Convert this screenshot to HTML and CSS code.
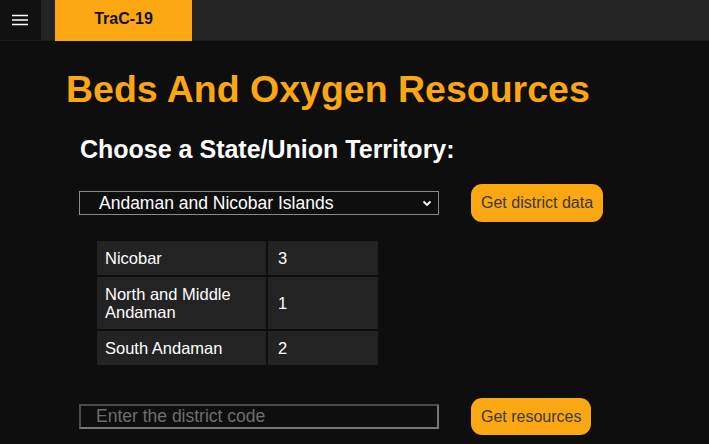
FILE: index.html
```html
<!DOCTYPE html>
<html>
<head>
<meta charset="utf-8">
<link rel="stylesheet" href="styles.css">
</head>
<body>
<nav class="topbar">
  <div class="menu-btn">
    <svg width="16" height="12" viewBox="0 0 16 12"><path d="M0 1.5h16M0 6h16M0 10.5h16" stroke="#fff" stroke-width="1.3"/></svg>
  </div>
  <div class="brand">TraC-19</div>
</nav>
<main class="content">
  <h1 class="title">Beds And Oxygen Resources</h1>
  <h2 class="subtitle">Choose a State/Union Territory:</h2>
  <div class="row">
    <div class="select-box">
      <span class="select-text">Andaman and Nicobar Islands</span>
      <svg class="chev" width="10" height="7" viewBox="0 0 10 7"><path d="M1.5 1.5L5 5l3.5-3.5" fill="none" stroke="#fff" stroke-width="1.8"/></svg>
    </div>
    <button class="btn">Get district data</button>
  </div>
  <table class="districts">
    <tr><td class="name">Nicobar</td><td class="code">3</td></tr>
    <tr><td class="name">North and Middle Andaman</td><td class="code">1</td></tr>
    <tr><td class="name">South Andaman</td><td class="code">2</td></tr>
  </table>
  <div class="row row-bottom">
    <input class="code-input" type="text" placeholder="Enter the district code">
    <button class="btn btn-res">Get resources</button>
  </div>
</main>
</body>
</html>
```
FILE: styles.css
```css
html, body {
  margin: 0;
  padding: 0;
  background: #0e0e0e;
  font-family: "Liberation Sans", Arial, sans-serif;
  color: #fff;
}
.topbar {
  display: flex;
  height: 40px;
  background: #232323;
  border-bottom: 1px solid #1a1a1a;
}
.menu-btn {
  width: 41px;
  height: 40px;
  background: #111;
  display: flex;
  align-items: center;
  justify-content: center;
  box-sizing: border-box;
  padding-right: 2px;
}
.brand {
  margin-left: 14px;
  width: 137px;
  height: 41px;
  background: #fba714;
  color: #111;
  font-weight: bold;
  font-size: 16px;
  display: flex;
  align-items: center;
  justify-content: center;
  padding-bottom: 4px;
  box-sizing: border-box;
}
.content {
  padding-left: 66px;
}
.title {
  margin: 26px 0 0 0;
  font-size: 37.5px;
  line-height: 44px;
  color: #fba714;
  font-weight: bold;
}
.subtitle {
  margin: 24px 0 0 14px;
  font-size: 25px;
  line-height: 29px;
  font-weight: bold;
  color: #fff;
}
.row {
  display: flex;
  align-items: center;
  margin-left: 13px;
  margin-top: 20px;
}
.select-box {
  width: 360px;
  height: 24px;
  box-sizing: border-box;
  border: 1px solid #8a8a8a;
  display: flex;
  align-items: center;
  padding-left: 19px;
  padding-right: 6px;
}
.select-text {
  flex: 1;
  font-size: 17.5px;
  color: #fff;
}
.chev { margin-top: 1px; }
.btn {
  margin-left: 32px;
  height: 38px;
  padding: 0 10px;
  background: #fba714;
  border: none;
  border-radius: 11px;
  font-family: "Liberation Sans", Arial, sans-serif;
  font-size: 16px;
  color: #3a3a30;
}
.districts {
  margin: 17px 0 0 29px;
  border-spacing: 2px;
  border-collapse: separate;
}
.districts td {
  background: #232323;
  font-size: 16.5px;
  line-height: 18px;
  color: #fff;
  padding: 8px 8px;
}
.districts .name { width: 153px; }
.districts .code { width: 92px; padding-left: 10px; }
.row-bottom { margin-top: 31px; }
.code-input {
  width: 360px;
  height: 25px;
  box-sizing: border-box;
  background: #0e0e0e;
  border: 2px solid #4a4a4a;
  border-bottom-color: #777;
  border-right-color: #777;
  padding: 0 0 0 15px;
  font-family: "Liberation Sans", Arial, sans-serif;
  font-size: 17.5px;
  color: #fff;
  outline: none;
}
.code-input::placeholder { color: #6e6e6e; }
.btn-res { height: 37px; }
```
